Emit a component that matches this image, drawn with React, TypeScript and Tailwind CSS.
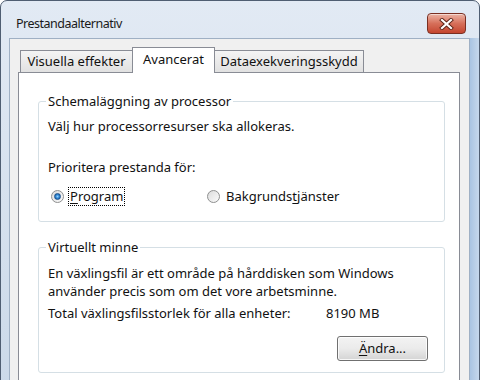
import { ReactNode } from "react";

const ui = "font-['Noto_Sans','DejaVu_Sans',sans-serif]";

function Radio({ checked }: { checked?: boolean }) {
  return (
    <span className="flex h-[13px] w-[13px] shrink-0 items-center justify-center rounded-full border border-[#8e8f8f] bg-linear-to-br from-[#dcdcdc] to-[#fbfbfb]">
      {checked && (
        <span className="h-[7px] w-[7px] rounded-full border border-[#1b4f8a] bg-radial from-[#8fd2ff] via-[#2c83d0] to-[#135ba3]" />
      )}
    </span>
  );
}

function GroupBox({ title, className, children }: { title: string; className: string; children: ReactNode }) {
  return (
    <fieldset className={`rounded-[3px] border border-[#d5dfe5] pl-[9px] ${className}`}>
      <legend className="-ml-[2px] px-[2px] leading-[17px]">{title}</legend>
      {children}
    </fieldset>
  );
}

function CloseButton() {
  return (
    <button className="flex h-[21px] w-[39px] items-center justify-center rounded-[4px] border border-[#7a2f22] bg-linear-to-b from-[#eab2a4] via-[#d66f5a] to-[#c4452f] shadow-[inset_0_1px_0_rgba(255,255,255,0.5)]">
      <svg width="15" height="12" viewBox="0 0 15 12">
        <path d="M3 2 L12 10 M12 2 L3 10" stroke="#5a2418" strokeWidth="4" strokeLinecap="square" />
        <path d="M3 2 L12 10 M12 2 L3 10" stroke="#ffffff" strokeWidth="2.2" strokeLinecap="square" />
      </svg>
    </button>
  );
}

export default function App() {
  return (
    <div className={`h-[380px] w-[480px] overflow-hidden bg-white text-[13px] text-[#111] ${ui}`}>
      <div className="flex h-[392px] flex-col rounded-t-[7px] border border-[#4f5e72] bg-linear-to-b from-[#e2eaf4] to-[#cbd9e9]">
        {/* title bar */}
        <div className="flex h-[37px] shrink-0 items-start justify-between pl-[15px] pr-[13px]">
          <span className="mt-[13px] text-[12.5px] leading-[20px] tracking-[-0.5px] text-[#1a1a1a]">Prestandaalternativ</span>
          <div className="mt-[12px]">
            <CloseButton />
          </div>
        </div>

        <div className="flex min-h-0 flex-1">
          <div className="w-[8px] shrink-0" />
          <div className="flex min-w-0 flex-1 flex-col border-l border-t border-r border-[#9fb0c4] bg-[#f0f0f0] pl-[8px] pr-[9px] pt-[8px]">
            {/* tabs */}
            <div className="relative z-10 -mb-px flex h-[26px] items-end">
              <div className="mb-px ml-[2px] h-[22px] w-[112px] border-l border-t border-[#898c95] bg-linear-to-b from-[#f4f4f4] to-[#e1e1e1] pt-[2px] text-center leading-[17px]">
                Visuella effekter
              </div>
              <div className="h-[26px] w-[83px] border-l border-t border-r border-[#898c95] bg-white pt-[3px] text-center leading-[17px]">
                Avancerat
              </div>
              <div className="mb-px h-[22px] w-[149px] border-t border-r border-[#898c95] bg-linear-to-b from-[#f4f4f4] to-[#e1e1e1] pt-[2px] text-center leading-[17px]">
                Dataexekveringsskydd
              </div>
            </div>

            {/* tab panel */}
            <div className="flex-1 border border-[#898c95] bg-white pl-[19px] pr-[14px] pt-[20px]">
              <GroupBox title="Schemaläggning av processor" className="pb-[15px] pr-[14px] pt-[8px]">
                <p className="leading-[17px]">Välj hur processorresurser ska allokeras.</p>
                <p className="mt-[24px] leading-[17px]">Prioritera prestanda för:</p>
                <div className="mt-[10px] flex h-[20px] items-center">
                  <div className="ml-[3px] flex w-[156px] items-center gap-[4px]">
                    <Radio checked />
                    <span className="border border-dotted border-black px-px leading-[17px]">
                      <span className="underline underline-offset-2">P</span>rogram
                    </span>
                  </div>
                  <div className="flex items-center gap-[6px]">
                    <Radio />
                    <span className="leading-[17px]">
                      Bakgrunds<span className="underline underline-offset-2">t</span>jänster
                    </span>
                  </div>
                </div>
              </GroupBox>

              <GroupBox title="Virtuellt minne" className="mt-[17px] pb-[11px] pr-[16px] pt-[8px]">
                <p className="leading-[18px]">
                  En växlingsfil är ett område på hårddisken som Windows
                  <br />
                  använder precis som om det vore arbetsminne.
                </p>
                <div className="mt-[5px] flex leading-[17px]">
                  <span className="w-[278px]">Total växlingsfilsstorlek för alla enheter:</span>
                  <span>8190 MB</span>
                </div>
                <div className="mt-[14px] flex justify-end">
                  <button className="h-[25px] w-[91px] rounded-[3px] border border-[#707070] bg-linear-to-b from-[#f3f3f3] via-[#ebebeb] to-[#d4d4d4] leading-[17px] shadow-[inset_0_0_0_1px_rgba(255,255,255,0.8)]">
                    <span className="underline underline-offset-2">Ä</span>ndra...
                  </button>
                </div>
              </GroupBox>
            </div>
          </div>
          <div className="w-[9px] shrink-0 bg-linear-to-r from-[#a9c4e2] to-[#c6d8ec]" />
        </div>
      </div>
    </div>
  );
}
